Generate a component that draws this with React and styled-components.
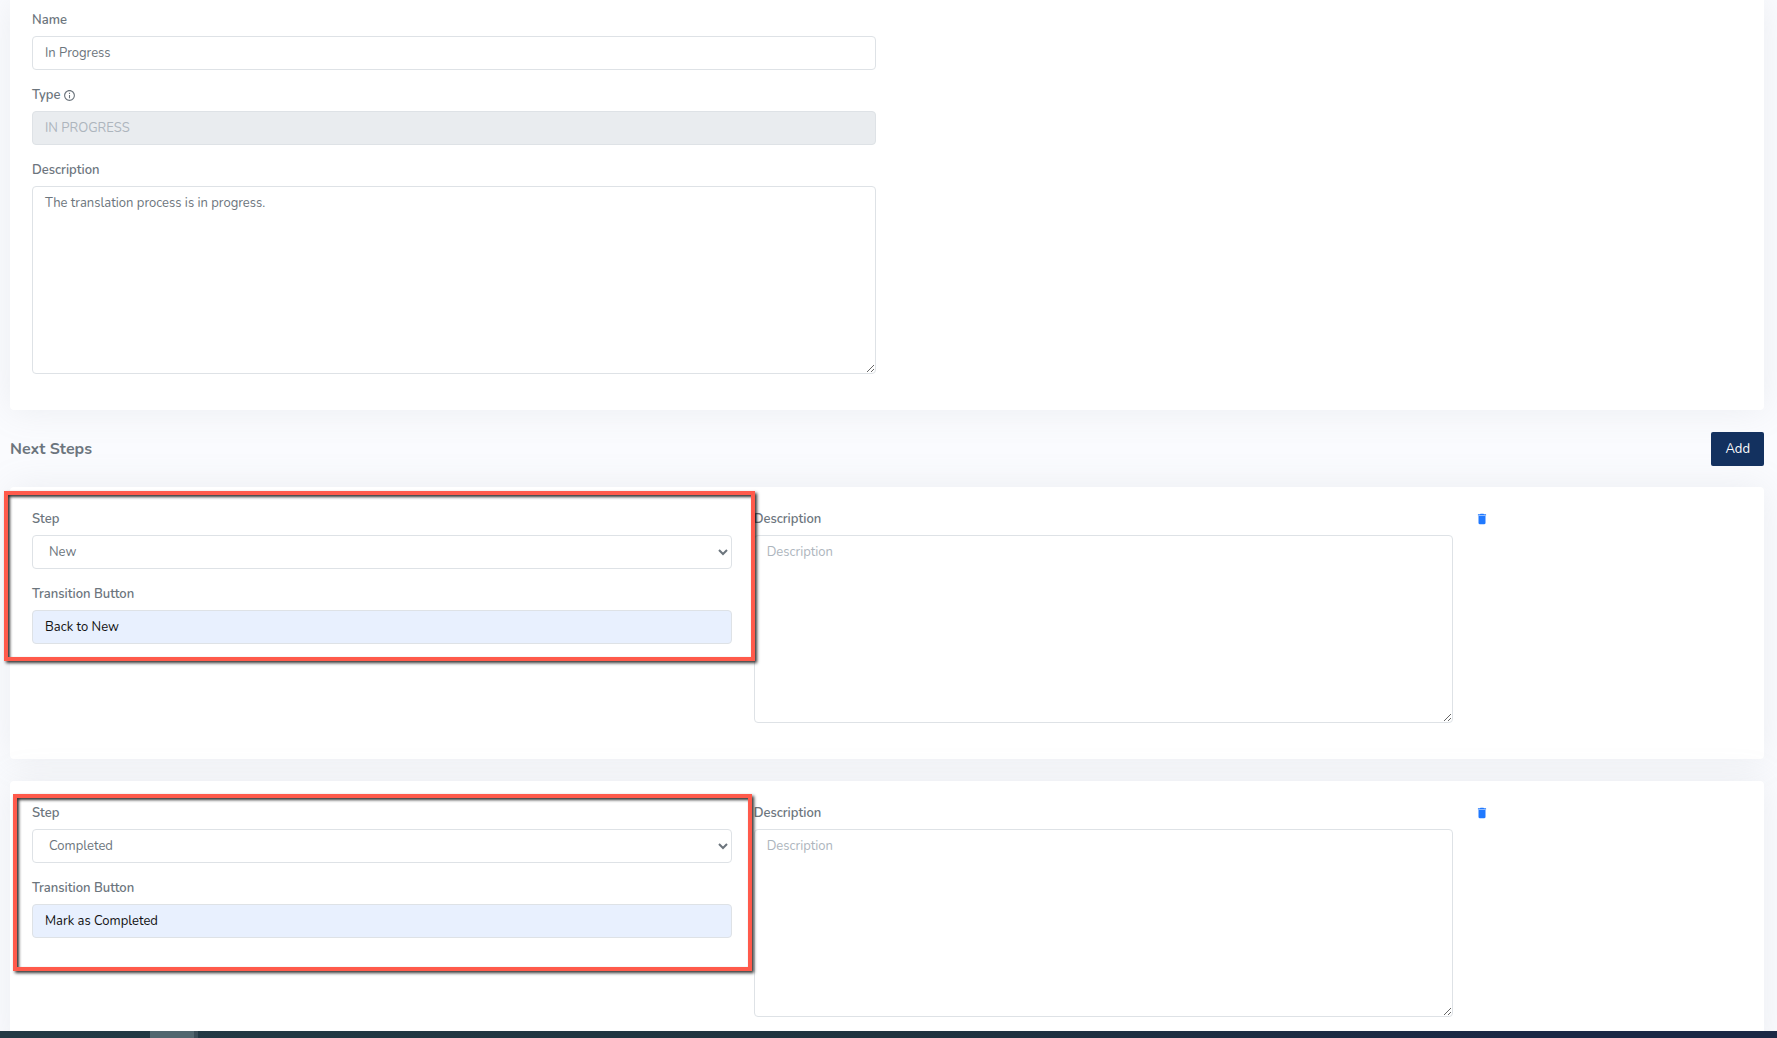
import { useState } from "react";
import styled, { createGlobalStyle } from "styled-components";
import { MdDelete, MdInfoOutline } from "react-icons/md";

const GlobalStyle = createGlobalStyle`
  * {
    box-sizing: border-box;
  }

  body {
    margin: 0;
    background: #fafbfe;
    color: #6c757d;
    font-family: Nunito, Lato, sans-serif;
    font-size: 13px;
    line-height: 20px;
  }
`;

const Screen = styled.div`
  display: flex;
  flex-direction: column;
  height: 100vh;
`;

const Content = styled.main`
  flex: 1;
  min-height: 0;
  padding: 0 13px 0 10px;
  overflow-y: auto;
  scrollbar-width: none;
`;

const Card = styled.section`
  padding: ${(props) => (props.$continued ? "10px" : "22px")} 22px 21px;
  margin-bottom: 22px;
  background: #fff;
  border-radius: ${(props) => (props.$continued ? "0 0 4px 4px" : "4px")};
  box-shadow: 0 0 35px 0 rgba(154, 161, 171, 0.15);
`;

const Row = styled.div`
  display: grid;
  grid-template-columns: repeat(12, minmax(0, 1fr));
  column-gap: 22px;
  align-items: start;
`;

const Col = styled.div`
  position: relative;
  grid-column: span ${(props) => props.$span};
`;

const Field = styled.div`
  margin-bottom: 15px;
`;

const Label = styled.label`
  display: flex;
  align-items: center;
  gap: 3px;
  margin-bottom: 6px;
  font-weight: 600;
`;

const Control = styled.input`
  display: block;
  width: 100%;
  height: 34px;
  padding: 0 12px;
  border: 1px solid #dee2e6;
  border-radius: 4px;
  background: ${(props) => (props.$filled ? "#e8f0fe" : "#fff")};
  color: ${(props) => (props.$filled ? "#111" : "#6c757d")};
  font: inherit;

  &:disabled {
    background: #e9ecef;
    color: #adb5bd;
  }

  &::placeholder {
    color: #adb5bd;
  }
`;

const TextArea = styled(Control)`
  height: 188px;
  padding: 6px 12px;
  resize: vertical;
`;

const Header = styled.header`
  display: flex;
  align-items: center;
  justify-content: space-between;
  margin-bottom: 21px;
`;

const Title = styled.h4`
  margin: 0;
  font-size: 16px;
  font-weight: 700;
`;

const AddButton = styled.button`
  height: 34px;
  padding: 0 14px;
  border: 0;
  border-radius: 2px;
  background: #13315f;
  color: #fff;
  font: inherit;
`;

const DeleteButton = styled.button`
  display: flex;
  align-items: center;
  height: 20px;
  padding: 0;
  border: 0;
  background: none;
  color: #2079ff;
  font-size: 14px;
`;

// frame drawn over a group of fields
const Highlight = styled.div`
  position: absolute;
  inset: ${(props) => props.$inset};
  z-index: 1;
  border: 4px solid #ff5a4b;
  box-shadow: 2px 2px 3px rgba(0, 0, 0, 0.8), inset 2px 2px 3px rgba(0, 0, 0, 0.8);
  pointer-events: none;
`;

const Taskbar = styled.footer`
  display: flex;
  height: 7px;
  padding-left: 150px;
  background: linear-gradient(90deg, #233a45, #20333f 50%, #1b2845 85%);
`;

const TaskbarItem = styled.span`
  width: 44px;
  background: #52666f;
  box-shadow: 4px 0 0 #3b4d58;
`;

const steps = [
  { id: 1, step: "New", button: "Back to New", inset: "-18px -23px -2px -28px" },
  { id: 2, step: "Completed", button: "Mark as Completed", inset: "-9px -20px -18px -19px" },
];

const StepCard = ({ item }) => {
  const [button, setButton] = useState(item.button);

  return (
    <Card>
      <Row>
        <Col $span={5}>
          <Field>
            <Label htmlFor={`step-${item.id}`}>Step</Label>
            <Control as="select" id={`step-${item.id}`} defaultValue={item.step}>
              <option>New</option>
              <option>In Progress</option>
              <option>Completed</option>
            </Control>
          </Field>
          <Field>
            <Label htmlFor={`button-${item.id}`}>Transition Button</Label>
            <Control
              $filled
              id={`button-${item.id}`}
              value={button}
              onChange={(e) => setButton(e.target.value)}
            />
          </Field>
          <Highlight $inset={item.inset} />
        </Col>
        <Col $span={5}>
          <Field>
            <Label htmlFor={`description-${item.id}`}>Description</Label>
            <TextArea as="textarea" id={`description-${item.id}`} placeholder="Description" />
          </Field>
        </Col>
        <Col $span={2}>
          <DeleteButton type="button" aria-label="Delete step">
            <MdDelete />
          </DeleteButton>
        </Col>
      </Row>
    </Card>
  );
};

const App = () => {
  return (
    <Screen>
      <GlobalStyle />
      <Content>
        <Card $continued>
          <Row>
            <Col $span={6}>
              <Field>
                <Label htmlFor="name">Name</Label>
                <Control id="name" defaultValue="In Progress" />
              </Field>
              <Field>
                <Label htmlFor="type">
                  Type <MdInfoOutline />
                </Label>
                <Control id="type" defaultValue="IN PROGRESS" disabled />
              </Field>
              <Field>
                <Label htmlFor="description">Description</Label>
                <TextArea
                  as="textarea"
                  id="description"
                  defaultValue="The translation process is in progress."
                />
              </Field>
            </Col>
          </Row>
        </Card>
        <Header>
          <Title>Next Steps</Title>
          <AddButton type="button">Add</AddButton>
        </Header>
        {steps.map((item) => (
          <StepCard item={item} key={item.id} />
        ))}
      </Content>
      <Taskbar>
        <TaskbarItem />
      </Taskbar>
    </Screen>
  );
};

export default App;
